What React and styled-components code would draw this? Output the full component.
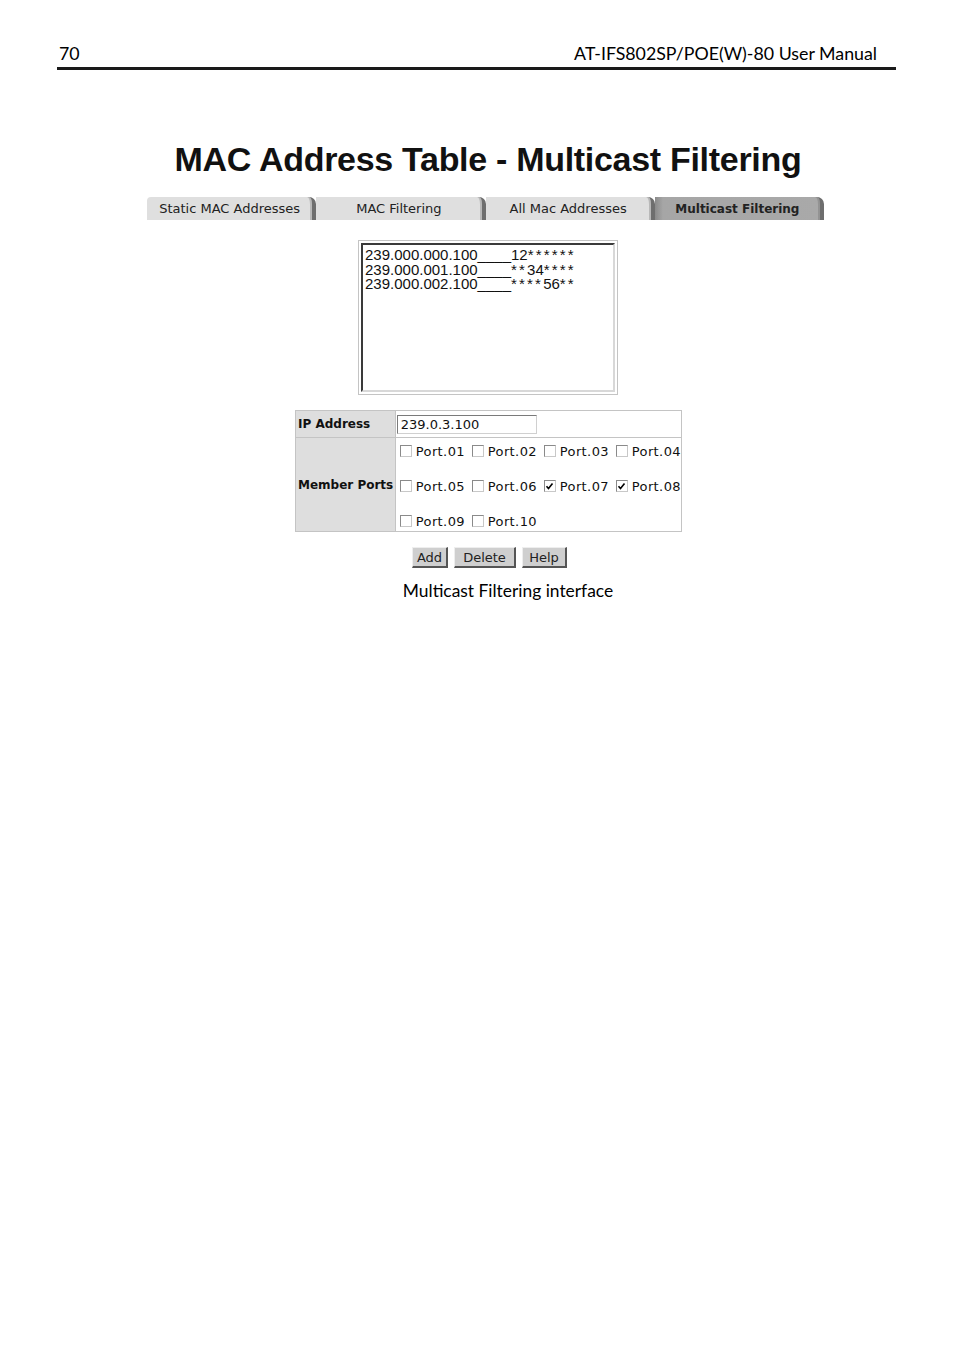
import React from 'react';
import styled, { createGlobalStyle } from 'styled-components';

const GlobalStyle = createGlobalStyle`
  html, body {
    margin: 0;
    padding: 0;
    background: #fff;
  }
  body {
    font-family: 'Lato', 'Open Sans', sans-serif;
    color: #000;
  }
`;

const Page = styled.div`
  width: 954px;
  min-height: 1350px;
  box-sizing: border-box;
  padding: 42px 0 0 57px;
`;

const Header = styled.header`
  width: 839px;
  display: flex;
  justify-content: space-between;
  align-items: flex-end;
  padding: 0 19px 3px 2px;
  box-sizing: border-box;
  font-family: 'Lato', sans-serif;
  font-size: 17.8px;
  line-height: 22px;
  border-bottom: 3px solid #1a1a1a;
`;

const Content = styled.section`
  width: 677px;
  margin: 69px 0 0 90px;
  display: flex;
  flex-direction: column;
  align-items: center;
`;

const Title = styled.h1`
  margin: 0 0 0 5px;
  font-family: 'Liberation Sans', Arial, sans-serif;
  font-weight: bold;
  font-size: 34px;
  line-height: 40px;
  letter-spacing: -0.3px;
  color: #111;
`;

const Tabs = styled.nav`
  margin-top: 18px;
  width: 677px;
  display: flex;
`;

const Tab = styled.div`
  flex: 0 0 25%;
  height: 23px;
  box-sizing: border-box;
  display: flex;
  align-items: center;
  justify-content: center;
  font-family: 'DejaVu Sans', Verdana, sans-serif;
  font-size: ${(p) => (p.$active ? '12px' : '13px')};
  font-weight: ${(p) => (p.$active ? 'bold' : 'normal')};
  color: #222;
  background: ${(p) =>
    p.$active
      ? 'linear-gradient(90deg, #8a8a8a 0px, #a6a6a6 8px, #a9a9a9 100%)'
      : '#dfdfdf'};
  border-top-right-radius: 7px;
  border-top-left-radius: ${(p) => (p.$first ? '4px' : '0')};
  border-right: 4px solid #6e6e6e;
  box-shadow: inset -2px 0 0 ${(p) => (p.$active ? '#939393' : '#b8b8b8')};
`;

const ListFrame = styled.div`
  margin: 20px 0 0 5px;
  width: 260px;
  height: 155px;
  box-sizing: border-box;
  border: 1px solid #c4c4c4;
  padding: 2px;
  background: #fff;
`;

const ListBox = styled.div`
  height: 100%;
  box-sizing: border-box;
  border-top: 2px solid #3a3a3a;
  border-left: 2px solid #3a3a3a;
  border-right: 2px solid #d8d8d8;
  border-bottom: 2px solid #d8d8d8;
  padding: 3px 0 0 2px;
  font-family: 'Liberation Sans', Arial, sans-serif;
  font-size: 15px;
  line-height: 14.6px;
  color: #111;
`;

const Stars = styled.span`
  letter-spacing: 2.2px;
`;

const FormTable = styled.table`
  margin: 15px 0 0 6px;
  width: 387px;
  border-collapse: collapse;
  border: 1px solid #c4c4c4;
  font-family: 'DejaVu Sans', Verdana, sans-serif;
  font-size: 13px;
  td {
    border: 1px solid #c4c4c4;
    padding: 0;
  }
`;

const Label = styled.td`
  width: 97px;
  background: #dedede;
  font-weight: bold;
  font-size: 12px;
  padding-left: 2px !important;
  white-space: nowrap;
  color: #111;
`;

const Field = styled.td`
  height: ${(p) => (p.$h ? `${p.$h}px` : 'auto')};
  background: #fff;
  vertical-align: middle;
`;

const TextInput = styled.div`
  margin-left: 1px;
  width: 140px;
  height: 19px;
  box-sizing: border-box;
  border-top: 1px solid #7a7a7a;
  border-left: 1px solid #7a7a7a;
  border-right: 1px solid #d0d0d0;
  border-bottom: 1px solid #d0d0d0;
  padding-left: 3px;
  font-size: 13px;
  line-height: 17px;
  color: #111;
`;

const PortGrid = styled.div`
  display: grid;
  grid-template-columns: repeat(3, 72px) auto;
  row-gap: 17px;
  padding: 4px 0 1px 4px;
`;

const Port = styled.label`
  display: flex;
  align-items: center;
  gap: 4px;
  height: 18px;
  white-space: nowrap;
  letter-spacing: 0.4px;
  color: #111;
`;

const Box = styled.span`
  width: 12px;
  height: 12px;
  flex: none;
  box-sizing: border-box;
  border: 1px solid #8a8a8a;
  border-right-color: #c8c8c8;
  border-bottom-color: #c8c8c8;
  background: #fff;
  display: inline-flex;
  align-items: center;
  justify-content: center;
`;

const Buttons = styled.div`
  margin: 15px 0 0 8px;
  display: flex;
  gap: 6px;
`;

const Button = styled.button`
  height: 21px;
  width: ${(p) => p.$w}px;
  box-sizing: border-box;
  padding: 0;
  font-family: 'DejaVu Sans', Verdana, sans-serif;
  font-size: 13px;
  color: #222;
  background: #cfcfcf;
  border-top: 1px solid #eee;
  border-left: 1px solid #eee;
  border-right: 2px solid #555;
  border-bottom: 2px solid #555;
`;

const Caption = styled.p`
  width: 722px;
  margin: 12px 0 0 90px;
  text-align: center;
  font-family: 'Lato', sans-serif;
  font-size: 17.4px;
  line-height: 22px;
`;

const Checkbox = ({ checked }) => (
  <Box>
    {checked && (
      <svg width="9" height="9" viewBox="0 0 9 9">
        <path d="M1.5 4.2 L3.5 6.5 L7.5 1.5" fill="none" stroke="#000" strokeWidth="1.6" />
      </svg>
    )}
  </Box>
);

const tabs = ['Static MAC Addresses', 'MAC Filtering', 'All Mac Addresses', 'Multicast Filtering'];

const ports = Array.from({ length: 10 }, (_, i) => ({
  name: `Port.${String(i + 1).padStart(2, '0')}`,
  checked: i === 6 || i === 7,
}));

export default function App() {
  return (
    <>
      <GlobalStyle />
      <Page>
        <Header>
          <span>70</span>
          <span>AT-IFS802SP/POE(W)-80 User Manual</span>
        </Header>

        <Content>
          <Title>MAC Address Table - Multicast Filtering</Title>

          <Tabs>
            {tabs.map((t, i) => (
              <Tab key={t} $first={i === 0} $active={i === 3}>
                {t}
              </Tab>
            ))}
          </Tabs>

          <ListFrame>
            <ListBox>
              <div>
                239.000.000.100____12<Stars>******</Stars>
              </div>
              <div>
                239.000.001.100____<Stars>**</Stars>34<Stars>****</Stars>
              </div>
              <div>
                239.000.002.100____<Stars>****</Stars>56<Stars>**</Stars>
              </div>
            </ListBox>
          </ListFrame>

          <FormTable>
            <tbody>
              <tr>
                <Label>IP Address</Label>
                <Field $h={26}>
                  <TextInput>239.0.3.100</TextInput>
                </Field>
              </tr>
              <tr>
                <Label>Member Ports</Label>
                <Field>
                  <PortGrid>
                    {ports.map((p) => (
                      <Port key={p.name}>
                        <Checkbox checked={p.checked} />
                        {p.name}
                      </Port>
                    ))}
                  </PortGrid>
                </Field>
              </tr>
            </tbody>
          </FormTable>

          <Buttons>
            <Button $w={36}>Add</Button>
            <Button $w={62}>Delete</Button>
            <Button $w={45}>Help</Button>
          </Buttons>
        </Content>

        <Caption>Multicast Filtering interface</Caption>
      </Page>
    </>
  );
}
